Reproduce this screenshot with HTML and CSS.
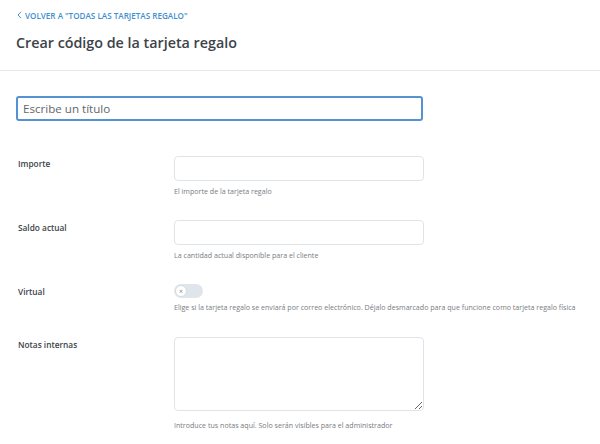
FILE: index.html
```html
<!DOCTYPE html>
<html lang="es">
<head>
<meta charset="utf-8">
<title>Crear código de la tarjeta regalo</title>
<link rel="stylesheet" href="styles.css">
</head>
<body>
<header class="page-header">
  <a class="back-link" href="#">
    <svg class="back-icon" width="5" height="8" viewBox="0 0 5 8"><path d="M4 0.8 L1 4 L4 7.2" fill="none" stroke="currentColor" stroke-width="1"/></svg>
    <span>Volver a "Todas las tarjetas regalo"</span>
  </a>
  <h1 class="page-title">Crear código de la tarjeta regalo</h1>
</header>
<main class="content">
  <input class="title-input" type="text" placeholder="Escribe un título">
  <div class="form">
    <div class="row">
      <label class="row-label">Importe</label>
      <div class="row-field">
        <input class="text-input" type="text">
        <p class="help">El importe de la tarjeta regalo</p>
      </div>
    </div>
    <div class="row">
      <label class="row-label">Saldo actual</label>
      <div class="row-field">
        <input class="text-input" type="text">
        <p class="help">La cantidad actual disponible para el cliente</p>
      </div>
    </div>
    <div class="row row-toggle">
      <label class="row-label">Virtual</label>
      <div class="row-field">
        <span class="toggle"><span class="knob">×</span></span>
        <p class="help help-toggle">Elige si la tarjeta regalo se enviará por correo electrónico. Déjalo desmarcado para que funcione como tarjeta regalo física</p>
      </div>
    </div>
    <div class="row">
      <label class="row-label">Notas internas</label>
      <div class="row-field">
        <textarea class="textarea"></textarea>
        <p class="help help-textarea">Introduce tus notas aquí. Solo serán visibles para el administrador</p>
      </div>
    </div>
  </div>
</main>
</body>
</html>
```
FILE: styles.css
```css
* { box-sizing: border-box; }
html, body { margin: 0; padding: 0; background: #fff; }
body {
  font-family: "Open Sans", "Noto Sans", sans-serif;
  color: #3c434a;
  width: 600px;
  overflow: hidden;
}
.page-header {
  padding: 10px 16px 0 16px;
  height: 71px;
  border-bottom: 1px solid #e3e7eb;
}
.back-link {
  display: flex;
  align-items: center;
  gap: 3px;
  height: 10px;
  color: #3f8fcf;
  text-decoration: none;
  font-size: 8.1px;
  font-weight: 600;
  text-transform: uppercase;
  padding-left: 1px;
}
.back-icon { display: block; }
.page-title {
  margin: 13px 0 0 0;
  font-size: 14.3px;
  line-height: 20px;
  font-weight: 600;
  color: #3c434a;
}
.content {
  padding: 25px 16px 0 16px;
}
.title-input {
  display: block;
  width: 407px;
  height: 25px;
  border: 2px solid #5592d2;
  border-radius: 3px;
  padding: 0 5px;
  font-family: inherit;
  font-size: 11.6px;
  color: #3c434a;
  outline: none;
}
.title-input::placeholder { color: #62676d; }
.form {
  margin-top: 35px;
  padding-left: 2px;
}
.row {
  display: grid;
  grid-template-columns: 156px 250px;
  padding-bottom: 24px;
}
.row-toggle { padding-bottom: 25px; }
.row-label {
  padding-top: 3px;
  font-size: 8.3px;
  line-height: 10px;
  font-weight: 600;
  color: #3c434a;
}
.text-input {
  display: block;
  width: 250px;
  height: 25px;
  border: 1px solid #dfe3ea;
  border-radius: 4px;
  outline: none;
}
.help {
  margin: 5px 0 0 0;
  font-size: 7.1px;
  line-height: 10px;
  color: #787c82;
  white-space: nowrap;
}
.help-toggle { margin-top: 4px; }
.help-textarea { margin-top: 9px; }
.toggle {
  display: flex;
  align-items: center;
  width: 29px;
  height: 14px;
  border-radius: 7px;
  background: #e0e5ec;
  padding-left: 1px;
}
.knob {
  display: flex;
  align-items: center;
  justify-content: center;
  width: 12px;
  height: 12px;
  border-radius: 50%;
  background: #fff;
  border: 1px solid #d6dbe2;
  color: #7d848d;
  font-size: 7px;
  line-height: 1;
}
.textarea {
  display: block;
  width: 250px;
  height: 74px;
  border: 1px solid #dfe3ea;
  border-radius: 4px;
  outline: none;
  resize: vertical;
}
```
